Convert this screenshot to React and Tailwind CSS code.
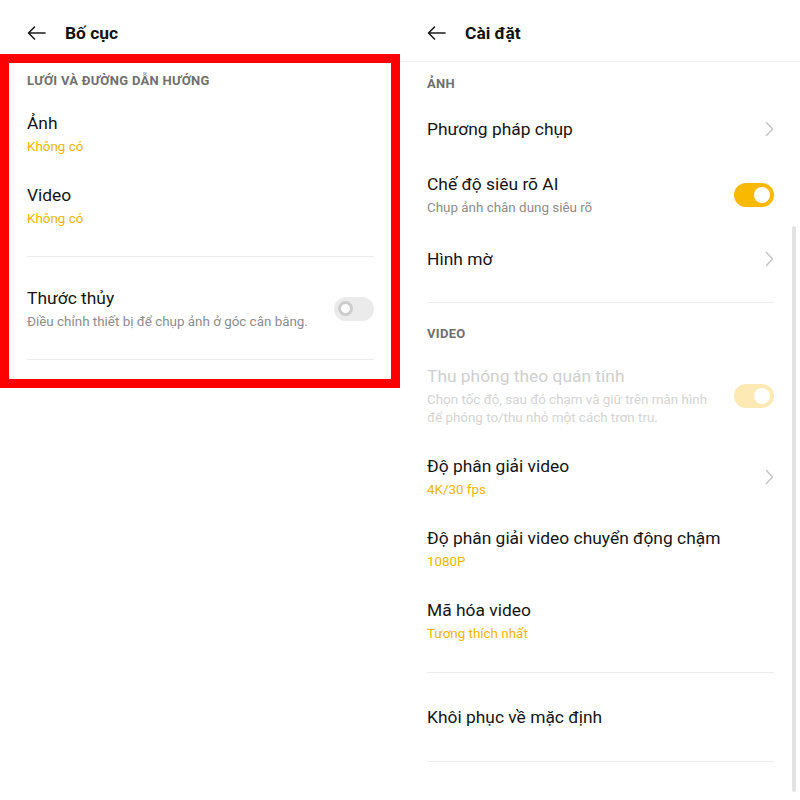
import { useState } from 'react';

const FONT = { fontFamily: 'Roboto, "Noto Sans", sans-serif' };

const BackArrow = () => (
	<svg width="19" height="14" viewBox="0 0 19 14" fill="none" stroke="#1a1a1a" strokeWidth="1.6" strokeLinecap="round" strokeLinejoin="round">
		<path d="M18 7H1.5M7.5 1L1.5 7l6 6" />
	</svg>
);

const Chevron = () => (
	<svg width="9" height="16" viewBox="0 0 9 16" fill="none" stroke="#c4c4c4" strokeWidth="1.4" strokeLinecap="round" strokeLinejoin="round">
		<path d="M1.5 1.5L7.5 8l-6 6.5" />
	</svg>
);

const Toggle = ({ on, faded }) => {
	if (!on) {
		return (
			<div className="w-[40px] h-[24px] rounded-full bg-[#ebebeb] flex items-center pl-[4px] shrink-0">
				<div className="w-[15px] h-[15px] rounded-full bg-white border-[3px] border-[#cdcdcd]" />
			</div>
		);
	}
	return (
		<div
			className={`w-[40px] h-[24px] rounded-full flex items-center justify-end pr-[4px] shrink-0 ${
				faded ? 'bg-[#fde9b3]' : 'bg-[#f9b900]'
			}`}
		>
			<div className="w-[16px] h-[16px] rounded-full bg-white" />
		</div>
	);
};

const Header = ({ title, bordered }) => (
	<div className={`h-[54px] flex items-end pb-[11px] ${bordered ? 'h-[62px] pb-[18px] border-b border-[#f1f1f1]' : ''}`}>
		<div className="flex items-center pl-[27px]">
			<BackArrow />
			<span className="ml-[19px] text-[17.4px] leading-[20px] font-bold text-[#111]">{title}</span>
		</div>
	</div>
);

const SectionLabel = ({ children, className = '' }) => (
	<div className={`text-[13px] leading-[16px] tracking-[0.3px] font-bold text-[#707070] uppercase ${className}`}>{children}</div>
);

const Title = ({ children, disabled }) => (
	<div className={`text-[17.4px] leading-[24px] ${disabled ? 'text-[#cfcfcf]' : 'text-[#141414]'}`}>{children}</div>
);

const Sub = ({ children, tone = 'gray' }) => {
	const color = tone === 'yellow' ? 'text-[#f2b600]' : tone === 'faded' ? 'text-[#d4d4d4]' : 'text-[#8c8c8c]';
	return <div className={`mt-[3px] text-[13.4px] leading-[18px] ${color}`}>{children}</div>;
};

const Divider = ({ className = '' }) => <div className={`h-px bg-[#ececec] ${className}`} />;

export default function App() {
	const [aiOn] = useState(true);

	return (
		<div className="w-[800px] h-[800px] bg-white flex overflow-hidden" style={FONT}>
			{/* Left: Bố cục */}
			<div className="w-[400px] flex flex-col">
				<Header title="Bố cục" />
				<div className="h-[334px] border-[9px] border-[#ff0000] pl-[18px] pr-[17px] pt-[10px]">
					<SectionLabel>Lưới và đường dẫn hướng</SectionLabel>
					<div className="mt-[22px]">
						<Title>Ảnh</Title>
						<Sub tone="yellow">Không có</Sub>
					</div>
					<div className="mt-[27px]">
						<Title>Video</Title>
						<Sub tone="yellow">Không có</Sub>
					</div>
					<Divider className="mt-[28px]" />
					<div className="mt-[29px] flex items-center justify-between">
						<div>
							<Title>Thước thủy</Title>
							<Sub>Điều chỉnh thiết bị để chụp ảnh ở góc cân bằng.</Sub>
						</div>
						<Toggle on={false} />
					</div>
					<Divider className="mt-[28px]" />
				</div>
			</div>

			{/* Right: Cài đặt */}
			<div className="w-[400px] flex flex-col relative">
				<Header title="Cài đặt" bordered />
				<div className="pl-[27px] pr-[26px] pt-[14px]">
					<SectionLabel>Ảnh</SectionLabel>
					<div className="mt-[25px] flex items-center justify-between">
						<Title>Phương pháp chụp</Title>
						<Chevron />
					</div>
					<div className="mt-[31px] flex items-center justify-between">
						<div>
							<Title>Chế độ siêu rõ AI</Title>
							<Sub>Chụp ảnh chân dung siêu rõ</Sub>
						</div>
						<Toggle on={aiOn} />
					</div>
					<div className="mt-[30px] flex items-center justify-between">
						<Title>Hình mờ</Title>
						<Chevron />
					</div>
					<Divider className="mt-[31px]" />
					<SectionLabel className="mt-[23px]">Video</SectionLabel>
					<div className="mt-[22px] flex items-center justify-between">
						<div>
							<Title disabled>Thu phóng theo quán tính</Title>
							<Sub tone="faded">
								Chọn tốc độ, sau đó chạm và giữ trên màn hình
								<br />
								để phóng to/thu nhỏ một cách trơn tru.
							</Sub>
						</div>
						<Toggle on faded />
					</div>
					<div className="mt-[27px] flex items-center justify-between">
						<div>
							<Title>Độ phân giải video</Title>
							<Sub tone="yellow">4K/30 fps</Sub>
						</div>
						<Chevron />
					</div>
					<div className="mt-[27px]">
						<Title>Độ phân giải video chuyển động chậm</Title>
						<Sub tone="yellow">1080P</Sub>
					</div>
					<div className="mt-[27px]">
						<Title>Mã hóa video</Title>
						<Sub tone="yellow">Tương thích nhất</Sub>
					</div>
					<Divider className="mt-[29px]" />
					<div className="mt-[32px]">
						<Title>Khôi phục về mặc định</Title>
					</div>
					<Divider className="mt-[32px]" />
				</div>
				{/* scrollbar */}
				<div className="absolute right-[4px] top-[226px] w-[4px] h-[566px] rounded-full bg-[#e3e3e3]" />
			</div>
		</div>
	);
}
